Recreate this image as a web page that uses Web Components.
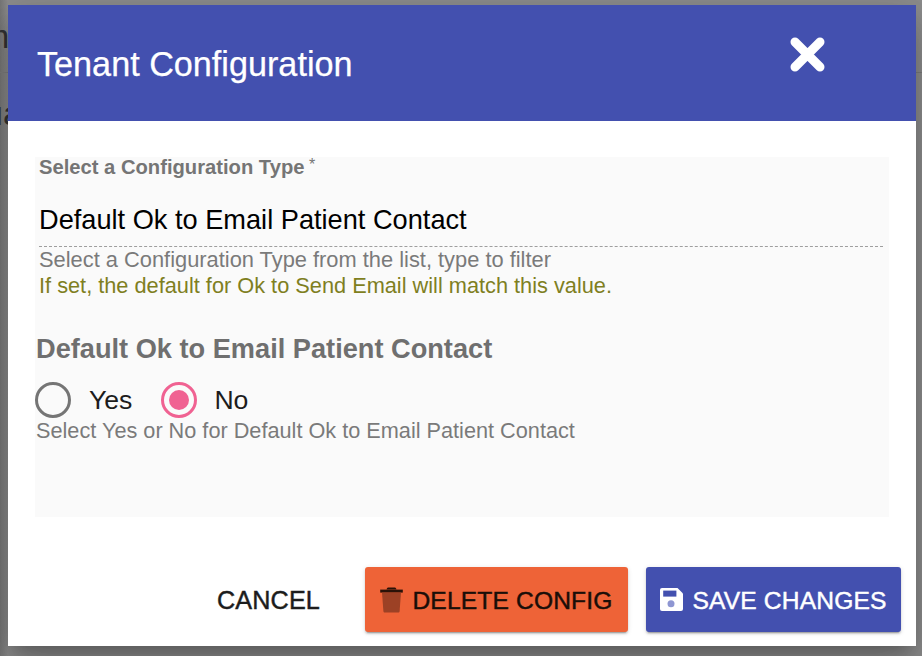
<!DOCTYPE html>
<html><head><meta charset="utf-8"><style>
html,body{margin:0;padding:0;height:100%;overflow:hidden}
body{font-family:"Liberation Sans",Arial,sans-serif}
</style></head><body>
<template id="t-app"><style>
:host{display:block;position:relative;width:922px;height:656px;box-sizing:border-box;background:#8c8c8c;padding:5px 6px 10px 8px;overflow:hidden}
.back{position:absolute;left:-19px;color:#333;font-size:34px;line-height:36px}
.b1{top:18px}.b2{top:95px;left:-16px}
.line{position:absolute;left:0;right:0;top:72px;height:1px;background:#7d7d7d}
.shade{position:absolute;inset:0;background:linear-gradient(90deg,#777 0,#8e8e8e 8px)}
::slotted(*){position:relative}
</style><div class="shade"></div><span class="back b1">m</span><span class="back b2">ua</span><div class="line"></div><slot></slot></template>

<template id="t-dialog"><style>
:host{display:flex;flex-direction:column;height:641px;background:#fff;box-shadow:0 11px 15px -7px rgba(0,0,0,.2),0 24px 38px 3px rgba(0,0,0,.14),0 9px 46px 8px rgba(0,0,0,.12)}
header{height:116px;flex:none;background:#4350af;color:#fff;display:flex;align-items:center;justify-content:space-between;padding:0 91px 0 29px;box-sizing:border-box}
h1{margin:0;font-size:34.2px;font-weight:400;line-height:36px;padding-top:2px;-webkit-text-stroke:.25px #fff}
.body{flex:1;padding:36px 27px 0 27px;box-sizing:border-box}
.foot{flex:none;display:flex;justify-content:flex-end;align-items:flex-start;padding:0 15px 14px 0;gap:18px}
::slotted(svg){display:block;margin-bottom:16px}
</style><header><h1><slot name="title"></slot></h1><slot name="close"></slot></header><div class="body"><slot></slot></div><div class="foot"><slot name="actions"></slot></div></template>

<template id="t-panel"><style>
:host{display:block;height:360px;background:#fafafa;box-sizing:border-box}
</style><slot></slot></template>

<template id="t-select"><style>
:host{display:block;padding:0 6px 0 4px}
.l{font-size:20.2px;font-weight:700;color:#757575;line-height:20px}
.l sup{font-weight:400;font-size:16px;line-height:0;vertical-align:4px;margin-left:-1px}
.v{font-size:27.2px;color:#000;line-height:30px;margin-top:28px;padding-bottom:11px;border-bottom:1px dashed #9e9e9e}
.h{font-size:21.85px;line-height:25px;color:#7a7a7a}
.w{font-size:21.75px;line-height:25px;color:#7f7f1f;margin-top:1px}
</style><div class="l"><slot name="label"></slot> <sup>*</sup></div><div class="v"><slot name="value"></slot></div><div class="h"><slot name="hint"></slot></div><div class="w"><slot name="note"></slot></div></template>

<template id="t-radios"><style>
:host{display:block;margin-top:36px}
.l{font-size:27.2px;font-weight:700;color:#6f6f6f;line-height:30px;padding-left:1px}
.g{display:flex;align-items:center;margin-top:18px;height:36px;gap:29px}
.h{font-size:21.7px;line-height:24px;color:#7a7a7a;margin-top:1px;padding-left:1px}
</style><div class="l"><slot name="label"></slot></div><div class="g"><slot name="options"></slot></div><div class="h"><slot name="hint"></slot></div></template>

<template id="t-radio"><style>
:host{display:inline-flex;align-items:center;gap:18px;font-size:26.6px;color:#1c1c1c;line-height:36px}
:host([checked]){gap:17px}
.r{width:36px;height:36px;box-sizing:border-box;border-radius:50%;border:3px solid #757575;display:flex;align-items:center;justify-content:center;flex:none}
:host([checked]) .r{border-color:#f06292}
:host([checked]) .r::after{content:"";width:20px;height:20px;border-radius:50%;background:#f06292}
</style><span class="r"></span><span><slot></slot></span></template>

<template id="t-btn"><style>
:host{display:inline-flex;align-items:center;justify-content:center;box-sizing:border-box;height:65px;border-radius:3px;font-size:24.6px;letter-spacing:.15px;white-space:nowrap;color:#1c1c1c;-webkit-text-stroke:.45px currentColor}
:host([kind=flat]){padding:0 27px;font-size:25.2px}
:host([kind=danger]){background:#ee6337;color:#1a0e08;width:263px;gap:9px;box-shadow:0 3px 1px -2px rgba(0,0,0,.2),0 2px 2px 0 rgba(0,0,0,.14),0 1px 5px 0 rgba(0,0,0,.12)}
:host([kind=primary]){background:#4350af;color:#fff;width:255px;gap:9px;box-shadow:0 3px 1px -2px rgba(0,0,0,.2),0 2px 2px 0 rgba(0,0,0,.14),0 1px 5px 0 rgba(0,0,0,.12)}
.t{padding-top:2px}
</style><slot name="icon"></slot><span class="t"><slot></slot></span></template>

<tenant-app>
<tenant-dialog>
<span slot="title">Tenant Configuration</span>
<svg slot="close" width="35" height="36" viewBox="0 0 35 36"><path d="M5 5L30 30M30 5L5 30" stroke="#fff" stroke-width="9" stroke-linecap="round" fill="none"/></svg>
<form-panel>
<select-field>
<span slot="label">Select a Configuration Type</span>
<span slot="value">Default Ok to Email Patient Contact</span>
<span slot="hint">Select a Configuration Type from the list, type to filter</span>
<span slot="note">If set, the default for Ok to Send Email will match this value.</span>
</select-field>
<radio-field>
<span slot="label">Default Ok to Email Patient Contact</span>
<radio-opt slot="options">Yes</radio-opt>
<radio-opt slot="options" checked>No</radio-opt>
<span slot="hint">Select Yes or No for Default Ok to Email Patient Contact</span>
</radio-field>
</form-panel>
<action-btn slot="actions" kind="flat">CANCEL</action-btn>
<action-btn slot="actions" kind="danger"><svg slot="icon" width="23" height="26" viewBox="0 0 23 26"><path d="M.2 2.6h22.6v3H.2z" fill="#2a1208"/><path d="M6.6 2.6C6.9 1 7.6.5 8.5.5h6c.9 0 1.6.5 1.9 2.1z" fill="#2a1208"/><path d="M2 5.6h19l-1.4 18.7c-.1.8-.6 1.2-1.3 1.2H4.7c-.7 0-1.2-.4-1.3-1.2z" fill="#9c4125"/></svg>DELETE CONFIG</action-btn>
<action-btn slot="actions" kind="primary"><svg slot="icon" width="23" height="23" viewBox="0 0 23 23"><path d="M2 0h15.5L23 5.5V21a2 2 0 0 1-2 2H2a2 2 0 0 1-2-2V2a2 2 0 0 1 2-2z" fill="#fff"/><rect x="3.2" y="2.6" width="13.2" height="6" fill="#4350af"/><circle cx="11" cy="15.8" r="3.5" fill="#8e96d2"/></svg>SAVE CHANGES</action-btn>
</tenant-dialog>
</tenant-app>
<script>
const reg=(n,t)=>customElements.define(n,class extends HTMLElement{constructor(){super();this.attachShadow({mode:'open'}).appendChild(document.getElementById(t).content.cloneNode(true))}});
reg('tenant-app','t-app');reg('tenant-dialog','t-dialog');reg('form-panel','t-panel');reg('select-field','t-select');reg('radio-field','t-radios');reg('radio-opt','t-radio');reg('action-btn','t-btn');
</script>
</body></html>
